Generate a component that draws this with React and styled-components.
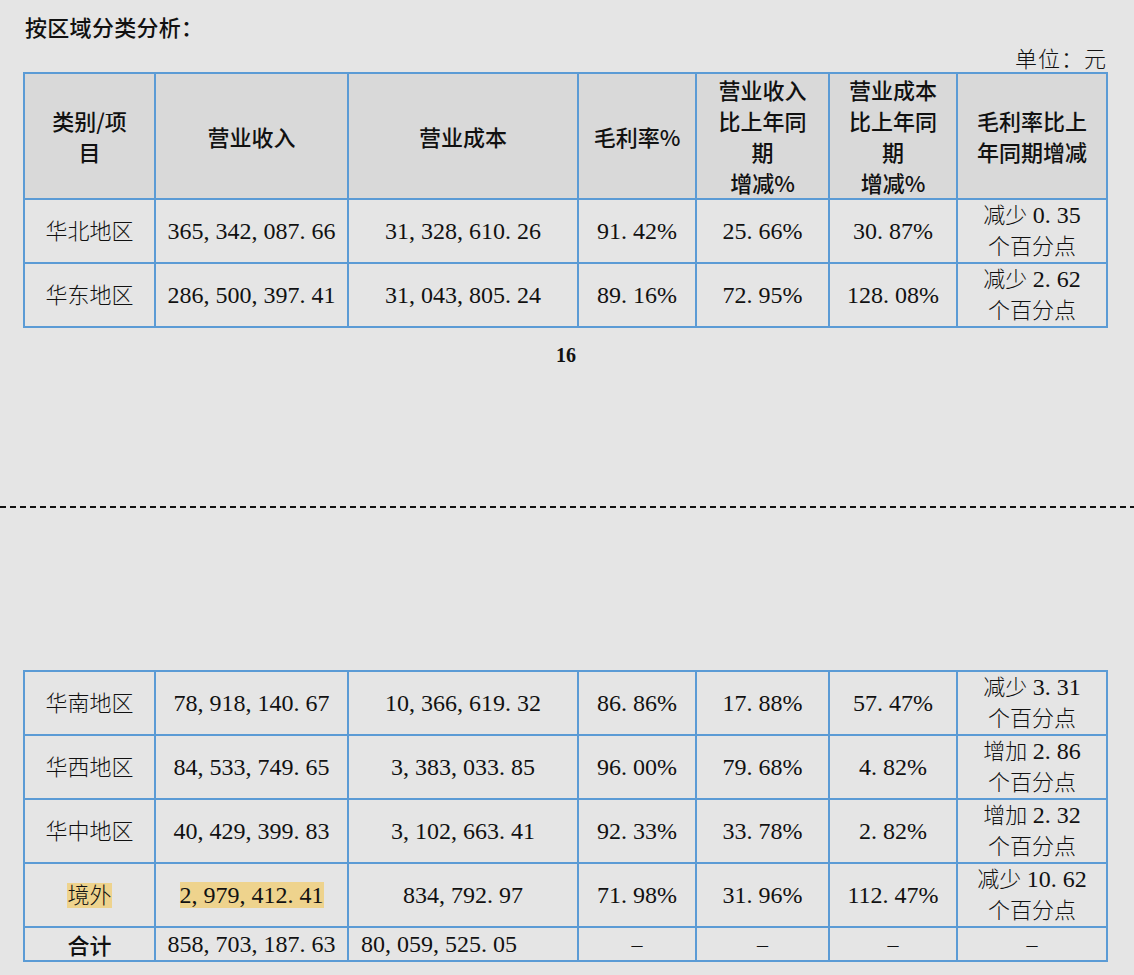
import React from 'react'
import styled, { createGlobalStyle } from 'styled-components'

const GlobalStyle = createGlobalStyle`
  html, body {
    margin: 0;
    padding: 0;
    background: #e5e5e5;
  }
  body {
    font-family: "Liberation Serif", "Noto Sans CJK SC", serif;
    color: #111;
  }
`

const COLS = [131, 193, 230, 118, 133, 128, 150]

const top = [
  { area: '华北地区', rev: '365,342,087.66', cost: '31,328,610.26', gm: '91.42%', revChg: '25.66%', costChg: '30.87%', gmChg: ['减少 0.35', '个百分点'] },
  { area: '华东地区', rev: '286,500,397.41', cost: '31,043,805.24', gm: '89.16%', revChg: '72.95%', costChg: '128.08%', gmChg: ['减少 2.62', '个百分点'] },
]

const bottom = [
  { area: '华南地区', rev: '78,918,140.67', cost: '10,366,619.32', gm: '86.86%', revChg: '17.88%', costChg: '57.47%', gmChg: ['减少 3.31', '个百分点'], h: 64 },
  { area: '华西地区', rev: '84,533,749.65', cost: '3,383,033.85', gm: '96.00%', revChg: '79.68%', costChg: '4.82%', gmChg: ['增加 2.86', '个百分点'], h: 63 },
  { area: '华中地区', rev: '40,429,399.83', cost: '3,102,663.41', gm: '92.33%', revChg: '33.78%', costChg: '2.82%', gmChg: ['增加 2.32', '个百分点'], h: 63 },
  { area: '境外', rev: '2,979,412.41', cost: '834,792.97', gm: '71.98%', revChg: '31.96%', costChg: '112.47%', gmChg: ['减少 10.62', '个百分点'], h: 64, mark: true },
]

const Page = styled.div`
  width: 1134px;
  height: 975px;
  overflow: hidden;
  display: flex;
  flex-direction: column;
`

const Title = styled.h2`
  margin: 11px 0 0 25px;
  font-family: "Noto Sans CJK SC", sans-serif;
  font-size: 22px;
  font-weight: 500;
  line-height: 30px;
  letter-spacing: 0.3px;
`

const Unit = styled.div`
  margin: 1px 27px 0 0;
  text-align: right;
  font-family: "Noto Sans CJK SC", serif;
  font-size: 22px;
  line-height: 30px;
  font-weight: 300;
  letter-spacing: 1px;
`

const Table = styled.table`
  margin: ${p => p.$top}px 0 0 23px;
  border-collapse: collapse;
  table-layout: fixed;
  width: 1085px;
`

const Row = styled.tr`
  height: ${p => p.$h}px;
`

const Head = styled.th`
  background: #d9d9d9;
  border: 2px solid #5b9bd5;
  padding: 0;
  font-family: "Noto Sans CJK SC", sans-serif;
  font-weight: 500;
  font-size: 22px;
  line-height: 31px;
  text-align: center;
  vertical-align: middle;
`

const Cell = styled.td`
  border: 2px solid #5b9bd5;
  padding: ${p => (p.$left ? '0 0 0 12px' : '0')};
  font-size: 22px;
  line-height: 31px;
  text-align: ${p => (p.$left ? 'left' : 'center')};
  vertical-align: middle;
  font-weight: ${p => (p.$bold ? 500 : 300)};
  font-family: ${p => (p.$bold ? '"Noto Sans CJK SC", sans-serif' : '"Liberation Serif", "Noto Sans CJK SC", serif')};
  white-space: nowrap;
`

const Figure = styled.span`
  font-family: "Liberation Serif", serif;
  font-size: 24px;
  font-weight: 400;
  background: ${p => (p.$mark ? '#eed38d' : 'transparent')};
`

const Sep = styled.span`
  margin-right: 6px;
`

const Mark = styled.span`
  background: ${p => (p.$on ? '#eed38d' : 'transparent')};
`

const PageNo = styled.div`
  margin-top: 15px;
  text-align: center;
  font-family: "Liberation Serif", serif;
  font-weight: 700;
  font-size: 20px;
  line-height: 24px;
  padding-right: 2px;
`

const Dashed = styled.div`
  margin-top: 139px;
  height: 2px;
  background: repeating-linear-gradient(90deg, #111 0 6px, transparent 6px 10px);
`

// 数字里逗号、小数点按宋体半角宽度撑开
const Num = ({ v, mark }) => {
  const parts = v.split(/([,.])/)
  return (
    <Figure $mark={mark}>
      {parts.map((p, i) => (p === ',' || p === '.' ? <Sep key={i}>{p}</Sep> : p))}
    </Figure>
  )
}

const Cols = () => (
  <colgroup>
    {COLS.map((w, i) => <col key={i} style={{ width: w }} />)}
  </colgroup>
)

const DataRow = ({ r }) => (
  <Row $h={r.h || 64}>
    <Cell><Mark $on={r.mark}>{r.area}</Mark></Cell>
    <Cell><Num v={r.rev} mark={r.mark} /></Cell>
    <Cell><Num v={r.cost} /></Cell>
    <Cell><Num v={r.gm} /></Cell>
    <Cell><Num v={r.revChg} /></Cell>
    <Cell><Num v={r.costChg} /></Cell>
    <Cell>
      {r.gmChg[0].split(' ')[0]} <Num v={r.gmChg[0].split(' ')[1]} />
      <br />
      {r.gmChg[1]}
    </Cell>
  </Row>
)

export default function App() {
  return (
    <Page>
      <GlobalStyle />
      <Title>按区域分类分析：</Title>
      <Unit>单位：元</Unit>
      <Table $top={0}>
        <Cols />
        <thead>
          <Row $h={125}>
            <Head>类别/项<br />目</Head>
            <Head>营业收入</Head>
            <Head>营业成本</Head>
            <Head>毛利率%</Head>
            <Head>营业收入<br />比上年同<br />期<br />增减%</Head>
            <Head>营业成本<br />比上年同<br />期<br />增减%</Head>
            <Head>毛利率比上<br />年同期增减</Head>
          </Row>
        </thead>
        <tbody>
          {top.map(r => <DataRow key={r.area} r={r} />)}
        </tbody>
      </Table>
      <PageNo>16</PageNo>
      <Dashed />
      <Table $top={162}>
        <Cols />
        <tbody>
          {bottom.map(r => <DataRow key={r.area} r={r} />)}
          <Row $h={34}>
            <Cell $bold>合计</Cell>
            <Cell><Num v="858,703,187.63" /></Cell>
            <Cell $left><Num v="80,059,525.05" /></Cell>
            <Cell>–</Cell>
            <Cell>–</Cell>
            <Cell>–</Cell>
            <Cell>–</Cell>
          </Row>
        </tbody>
      </Table>
    </Page>
  )
}
